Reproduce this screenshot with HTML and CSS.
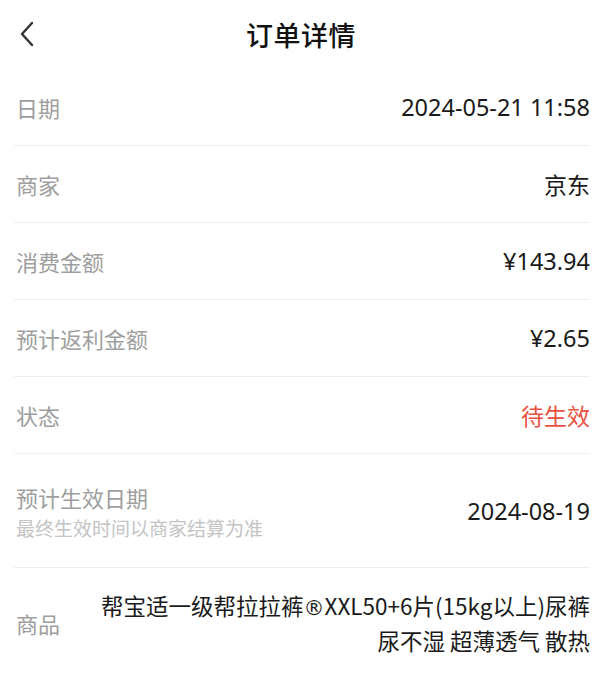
FILE: index.html
```html
<!DOCTYPE html>
<html lang="zh-CN">
<head>
<meta charset="utf-8">
<link rel="stylesheet" href="styles.css">
</head>
<body>
<div class="page">
  <header class="nav">
    <svg class="back" width="18" height="28" viewBox="0 0 18 28"><path d="M14 3 L4 14 L14 25" fill="none" stroke="#333" stroke-width="2.4" stroke-linecap="round" stroke-linejoin="round"/></svg>
    <div class="title">订单详情</div>
  </header>
  <div class="list">
    <div class="row"><div class="label">日期</div><div class="value">2024-05-21 11:58</div></div>
    <div class="row"><div class="label">商家</div><div class="value cjk">京东</div></div>
    <div class="row"><div class="label">消费金额</div><div class="value">¥143.94</div></div>
    <div class="row"><div class="label">预计返利金额</div><div class="value">¥2.65</div></div>
    <div class="row"><div class="label">状态</div><div class="value cjk red">待生效</div></div>
    <div class="row tall"><div class="label"><div>预计生效日期</div><div class="sub">最终生效时间以商家结算为准</div></div><div class="value">2024-08-19</div></div>
    <div class="row goods"><div class="label">商品</div><div class="value cjk multi">帮宝适一级帮拉拉裤<span class="reg">®</span>XXL50+6片(15kg以上)尿裤<br>尿不湿 超薄透气 散热</div></div>
  </div>
</div>
</body>
</html>
```
FILE: styles.css
```css
html, body { margin: 0; padding: 0; background: #fff; }
body { font-family: "Noto Sans CJK SC", "Noto Sans", sans-serif; color: #222; }
.page { width: 614px; }
.nav { position: relative; height: 69px; display: flex; align-items: center; justify-content: center; }
.back { position: absolute; left: 18px; top: 20px; }
.title { font-size: 27px; font-weight: 500; color: #111; margin-right: 12px; letter-spacing: 0.5px; }
.list { padding: 0 24px 0 14px; }
.row { display: flex; justify-content: space-between; align-items: center; height: 76px; border-bottom: 1px solid #eeeeee; padding-left: 2px; }
.row.tall { height: 113px; }
.row.goods { height: 109px; }
.label { font-size: 22px; color: #9e9e9e; flex-shrink: 0; }
.sub { font-size: 19px; color: #c4c4c4; margin-top: 1px; }
.value { font-size: 23.5px; color: #1a1a1a; text-align: right; font-family: "Noto Sans", "Noto Sans CJK SC", sans-serif; }
.value.cjk { font-size: 23px; font-family: "Noto Sans CJK SC", sans-serif; }
.value.red { color: #e9503f; }
.value.multi { line-height: 32px; font-size: 22.5px; }
.reg { font-family: "DejaVu Sans", sans-serif; font-size: 21px; }
```
